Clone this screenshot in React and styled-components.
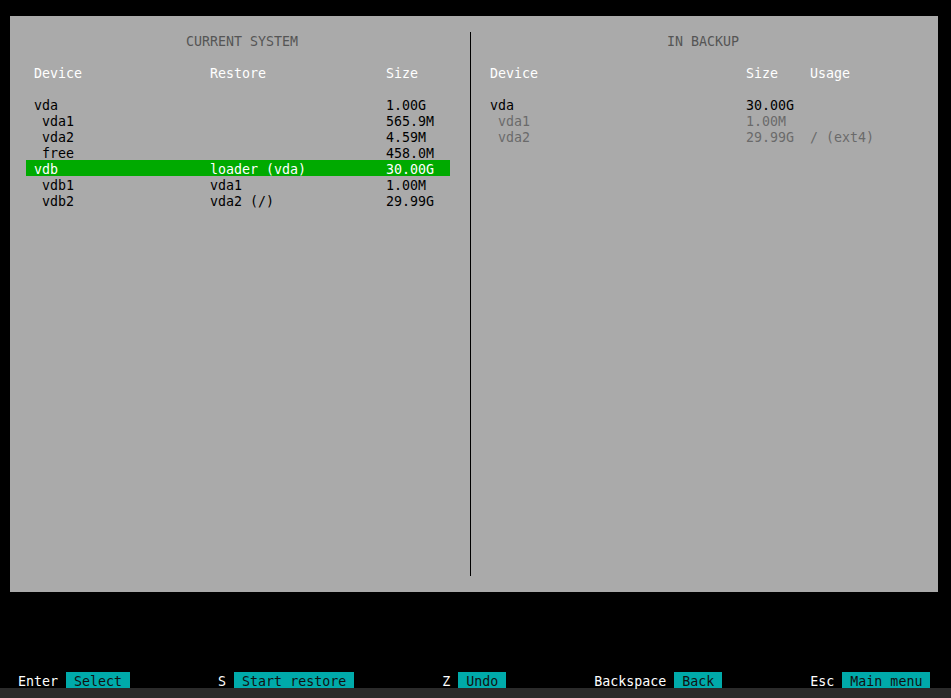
import React from "react";
import styled, { createGlobalStyle } from "styled-components";

const Global = createGlobalStyle`
  html, body { margin: 0; padding: 0; background: #2b2b2b; }
  body { font-family: "DejaVu Sans Mono", "Liberation Mono", monospace; font-size: 13.3px; line-height: 16px; }
  #root { width: 951px; height: 698px; overflow: hidden; }
`;

const Terminal = styled.div`
  width: 951px;
  height: 688px;
  background: #000;
  padding-top: 16px;
  box-sizing: border-box;
  display: flex;
  flex-direction: column;
  white-space: pre;
`;

const Panel = styled.div`
  margin-left: 10px;
  width: 928px;
  height: 576px;
  background: #aaaaaa;
  display: flex;
`;

const Pane = styled.div`
  width: ${(p) => p.$width}px;
  flex: ${(p) => (p.$width ? "none" : "1")};
  padding-top: 16px;
  display: flex;
  flex-direction: column;
`;

const Divider = styled.div`
  width: 1px;
  background: #000;
  margin: 16px 0;
`;

const Title = styled.div`
  color: #555555;
  height: 16px;
  box-sizing: border-box;
  padding-top: 2px;
  padding-left: ${(p) => p.$indent}px;
  margin-bottom: 16px;
`;

const Rows = styled.div`
  margin-left: ${(p) => p.$indent}px;
  width: ${(p) => p.$width}px;
  display: flex;
  flex-direction: column;
`;

const Row = styled.div`
  display: grid;
  grid-template-columns: ${(p) => p.$cols};
  height: 16px;
  box-sizing: border-box;
  padding: 2px 0 0 8px;
  color: ${(p) => (p.$selected ? "#fff" : p.$color || "#000")};
  background: ${(p) => (p.$selected ? "#00aa00" : "transparent")};
  margin-bottom: ${(p) => (p.$gap ? 16 : 0)}px;
`;

const Cell = styled.span`
  padding-left: ${(p) => (p.$indent ? 8 : 0)}px;
`;

const Spacer = styled.div`
  flex: 1;
`;

const Footer = styled.div`
  display: flex;
  gap: 88px;
  padding-left: 18px;
  height: 16px;
`;

const Group = styled.div`
  display: flex;
  color: #fff;
  height: 16px;
`;

const Key = styled.span`
  margin-right: 8px;
  padding-top: 2px;
`;

const Action = styled.span`
  display: block;
  height: 16px;
  box-sizing: border-box;
  background: #00aaaa;
  color: #111;
  padding: 2px 8px 0;
`;

const leftCols = "176px 176px auto";
const rightCols = "256px 64px auto";

const leftRows = [
  { d: "vda", r: "", s: "1.00G" },
  { d: "vda1", r: "", s: "565.9M", i: true },
  { d: "vda2", r: "", s: "4.59M", i: true },
  { d: "free", r: "", s: "458.0M", i: true },
  { d: "vdb", r: "loader (vda)", s: "30.00G", sel: true },
  { d: "vdb1", r: "vda1", s: "1.00M", i: true },
  { d: "vdb2", r: "vda2 (/)", s: "29.99G", i: true },
];

const rightRows = [
  { d: "vda", s: "30.00G", u: "" },
  { d: "vda1", s: "1.00M", u: "", i: true },
  { d: "vda2", s: "29.99G", u: "/ (ext4)", i: true },
];

const actions = [
  ["Enter", "Select"],
  ["S", "Start restore"],
  ["Z", "Undo"],
  ["Backspace", "Back"],
  ["Esc", "Main menu"],
];

export default function App() {
  return (
    <>
      <Global />
      <Terminal>
        <Panel>
          <Pane $width={460}>
            <Title $indent={176}>CURRENT SYSTEM</Title>
            <Rows $indent={16} $width={424}>
              <Row $cols={leftCols} $color="#fff" $gap>
                <Cell>Device</Cell>
                <Cell>Restore</Cell>
                <Cell>Size</Cell>
              </Row>
              {leftRows.map((r) => (
                <Row key={r.d} $cols={leftCols} $selected={r.sel}>
                  <Cell $indent={r.i}>{r.d}</Cell>
                  <Cell>{r.r}</Cell>
                  <Cell>{r.s}</Cell>
                </Row>
              ))}
            </Rows>
          </Pane>
          <Divider />
          <Pane>
            <Title $indent={196}>IN BACKUP</Title>
            <Rows $indent={11} $width={440}>
              <Row $cols={rightCols} $color="#fff" $gap>
                <Cell>Device</Cell>
                <Cell>Size</Cell>
                <Cell>Usage</Cell>
              </Row>
              {rightRows.map((r) => (
                <Row key={r.d} $cols={rightCols} $color={r.i ? "#6a6a6a" : "#000"}>
                  <Cell $indent={r.i}>{r.d}</Cell>
                  <Cell>{r.s}</Cell>
                  <Cell>{r.u}</Cell>
                </Row>
              ))}
            </Rows>
          </Pane>
        </Panel>
        <Spacer />
        <Footer>
          {actions.map(([k, a]) => (
            <Group key={k}>
              <Key>{k}</Key>
              <Action>{a}</Action>
            </Group>
          ))}
        </Footer>
      </Terminal>
    </>
  );
}
